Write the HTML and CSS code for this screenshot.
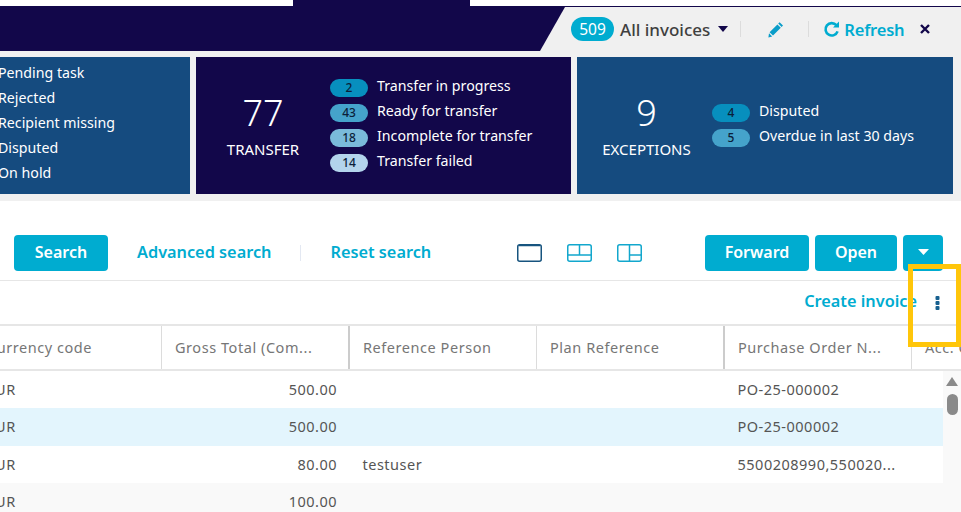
FILE: index.html
```html
<!DOCTYPE html>
<html lang="en">
  <head>
    <meta charset="UTF-8" />
    <meta name="viewport" content="width=device-width, initial-scale=1.0" />
    <title>Invoices</title>
    <link rel="stylesheet" href="styles.css">
  </head>
  <body>
    <div class="page">
      <!-- top strip -->
      <div class="top-strip"><div class="top-tab"></div></div>

      <!-- header -->
      <div class="header">
        <div class="header-brand"></div>
        <div class="header-tools">
          <span class="count-badge">509</span>
          <span class="view-name">All invoices</span>
          <svg class="caret-dark" width="10" height="6" viewBox="0 0 10 6"><path d="M0 0h10L5 6z" /></svg>
          <span class="tool-sep sep-first"></span>
          <svg class="pencil" width="16" height="17" viewBox="0 0 16 17">
            <path d="M11.6 1.2 15 4.4 13.6 5.9 10.2 2.6zM9.4 3.4 12.8 6.7 5 14.6 1.6 11.2zM1 12.2 4.2 15.4 0.4 16.4z" />
          </svg>
          <span class="tool-sep sep-second"></span>
          <svg class="refresh-icon" width="17" height="17" viewBox="0 0 17 17">
            <path d="M13.4 4.2A6.2 6.2 0 1 0 14.6 10.4" fill="none" stroke="#00acd0" stroke-width="2.6" />
            <path d="M10 6.6 16 6.6 16 .6z" />
          </svg>
          <span class="refresh-text">Refresh</span>
          <svg class="close-icon" width="10" height="10" viewBox="0 0 10 10"><path d="M1 1l8 8M9 1l-8 8" /></svg>
        </div>
      </div>

      <!-- stat cards -->
      <div class="stats">
        <div class="stat-card card-blue">
          <ul class="plain-list">
            <li>Pending task</li>
            <li>Rejected</li>
            <li>Recipient missing</li>
            <li>Disputed</li>
            <li>On hold</li>
          </ul>
        </div>
        <div class="stat-card card-navy">
          <div class="stat-total">
            <div class="stat-number">77</div>
            <div class="stat-label">TRANSFER</div>
          </div>
          <ul class="stat-list">
            <li><span class="pill pill-1">2</span><span class="stat-text">Transfer in progress</span></li>
            <li><span class="pill pill-2">43</span><span class="stat-text">Ready for transfer</span></li>
            <li><span class="pill pill-3">18</span><span class="stat-text">Incomplete for transfer</span></li>
            <li><span class="pill pill-4">14</span><span class="stat-text">Transfer failed</span></li>
          </ul>
        </div>
        <div class="stat-card card-blue">
          <div class="stat-total">
            <div class="stat-number">9</div>
            <div class="stat-label">EXCEPTIONS</div>
          </div>
          <ul class="stat-list">
            <li><span class="pill pill-1">4</span><span class="stat-text">Disputed</span></li>
            <li><span class="pill pill-2">5</span><span class="stat-text">Overdue in last 30 days</span></li>
          </ul>
        </div>
      </div>

      <!-- search toolbar -->
      <div class="toolbar">
        <button class="btn btn-search">Search</button>
        <a class="link link-advanced">Advanced search</a>
        <span class="link-sep"></span>
        <a class="link">Reset search</a>
        <div class="layout-icons">
          <svg class="layout-active" width="25" height="18" viewBox="0 0 25 18"><rect x=".75" y=".75" width="23.5" height="16.5" rx="2" /><path d="M2 1.5h21" /></svg>
          <svg width="25" height="18" viewBox="0 0 25 18"><rect x=".75" y=".75" width="23.5" height="16.5" rx="2" /><path d="M1 11h23M12.5 1v10" /></svg>
          <svg width="25" height="18" viewBox="0 0 25 18"><rect x=".75" y=".75" width="23.5" height="16.5" rx="2" /><path d="M12.5 1v16M12.5 11h12" /></svg>
        </div>
        <div class="toolbar-actions">
          <button class="btn btn-forward">Forward</button>
          <button class="btn btn-open">Open</button>
          <button class="btn btn-more"><svg width="11" height="6" viewBox="0 0 11 6"><path d="M0 0h11L5.5 6z" /></svg></button>
        </div>
      </div>

      <!-- actions -->
      <div class="actions-row">
        <a class="link link-create">Create invoice</a>
        <svg class="dots" width="5" height="14" viewBox="0 0 5 14"><rect x=".5" width="4" height="4" rx="1" /><rect x=".5" y="5" width="4" height="4" rx="1" /><rect x=".5" y="10" width="4" height="4" rx="1" /></svg>
      </div>

      <!-- table -->
      <div class="table-head">
        <div class="th">Currency code</div>
        <div class="th th-strong">Gross Total (Com...</div>
        <div class="th">Reference Person</div>
        <div class="th th-strong">Plan Reference</div>
        <div class="th">Purchase Order N...</div>
        <div class="th th-last">Acc. Code</div>
      </div>
      <div class="table-wrap">
        <div class="table-body">
          <div class="tr">
            <div class="td">EUR</div><div class="td td-num">500.00</div><div class="td"></div><div class="td"></div><div class="td">PO-25-000002</div>
          </div>
          <div class="tr tr-selected">
            <div class="td">EUR</div><div class="td td-num">500.00</div><div class="td"></div><div class="td"></div><div class="td">PO-25-000002</div>
          </div>
          <div class="tr">
            <div class="td">EUR</div><div class="td td-num">80.00</div><div class="td">testuser</div><div class="td"></div><div class="td">5500208990,550020...</div>
          </div>
          <div class="tr tr-alt">
            <div class="td">EUR</div><div class="td td-num">100.00</div><div class="td"></div><div class="td"></div><div class="td"></div>
          </div>
        </div>
        <div class="scroll-track">
          <div class="scroll-up"></div>
          <div class="scroll-thumb"></div>
        </div>
      </div>
    </div>

    <!-- highlight frame from the annotated screenshot -->
    <div class="highlight"></div>
  </body>
</html>
```

FILE: styles.css
```css
:root {
  --navy: #12074a;
  --blue: #154b7f;
  --accent: #00acd0;
  --panel: #f0f0f0;
  --line: #e6e6e6;
  --text: #555555;
  --head-text: #767676;
}

* {
  box-sizing: border-box;
  margin: 0;
  padding: 0;
}
html,
body {
  height: 100%;
  overflow: hidden;
}
body {
  font-family: "Noto Sans", "Open Sans", sans-serif;
  background-color: #ffffff;
  color: var(--text);
}
ul {
  list-style: none;
}
.page {
  width: 987px;
  margin-left: -26px;
}
.top-strip {
  height: 6px;
  padding-left: 319px;
}
.top-tab {
  width: 177px;
  height: 6px;
  background-color: var(--navy);
}
/* header */
.header {
  display: flex;
  height: 45px;
  background-color: var(--panel);
  border-top: 1px solid var(--navy);
}
.header-brand {
  width: 591px;
  background-color: var(--navy);
  clip-path: polygon(0 0, 100% 0, calc(100% - 25px) 100%, 0 100%);
}
.header-tools {
  display: flex;
  align-items: center;
  padding-left: 6px;
}
.count-badge {
  width: 43px;
  height: 24px;
  line-height: 24px;
  border-radius: 12px;
  background-color: var(--accent);
  color: #fff;
  font-size: 15.5px;
  text-align: center;
}
.view-name {
  margin-left: 6px;
  font-size: 17px;
  font-weight: 500;
  color: #3f3f3f;
}
.caret-dark {
  margin-left: 8px;
  fill: #12074a;
}
.tool-sep {
  width: 1px;
  height: 16px;
  background-color: #dcdcdc;
}
.sep-first {
  margin-left: 12px;
}
.pencil {
  margin-left: 27px;
  fill: #0a9dc9;
}
.sep-second {
  margin-left: 24px;
}
.refresh-icon {
  margin-left: 14px;
  fill: var(--accent);
}
.refresh-text {
  margin-left: 4px;
  font-size: 16.5px;
  font-weight: 600;
  letter-spacing: -0.2px;
  color: var(--accent);
}
.close-icon {
  margin-left: 16px;
  stroke: var(--navy);
  stroke-width: 2.4;
}
/* stat cards */
.stats {
  display: grid;
  grid-template-columns: 216px 375px 376px;
  gap: 6px;
  height: 150px;
  padding: 6px 0 7px;
  background-color: var(--panel);
}
.stat-card {
  display: flex;
  align-items: center;
  color: #fff;
  font-size: 14.2px;
}
.card-blue {
  background-color: var(--blue);
}
.card-navy {
  background-color: var(--navy);
}
.plain-list {
  padding-left: 24px;
  margin-top: -7px;
}
.plain-list li {
  height: 25px;
  line-height: 25px;
}
.stat-total {
  flex: 0 0 135px;
  padding-left: 4px;
  text-align: center;
}
.card-navy .stat-total {
  flex-basis: 134px;
  padding-left: 0;
}
.stat-number {
  font-size: 36px;
  font-weight: 300;
  line-height: 44px;
}
.stat-label {
  margin-top: 3px;
  font-size: 15px;
  line-height: 22px;
}
.stat-list li {
  display: flex;
  align-items: center;
  height: 25px;
}
.stat-text {
  margin-bottom: 5px;
}
.pill {
  flex: none;
  width: 38px;
  height: 18px;
  line-height: 18px;
  margin-right: 9px;
  border-radius: 9px;
  color: #0b1f3a;
  font-size: 12px;
  font-weight: 500;
  text-align: center;
}
.pill-1 {
  background-color: #078fbe;
}
.pill-2 {
  background-color: #45a3cb;
}
.pill-3 {
  background-color: #7abada;
}
.pill-4 {
  background-color: #b3d4ec;
}
/* toolbar */
.toolbar {
  display: flex;
  align-items: center;
  height: 80px;
  padding: 34px 18px 9px 40px;
  border-bottom: 1px solid var(--line);
}
.btn {
  height: 36px;
  padding-bottom: 2px;
  border: none;
  border-radius: 4px;
  background-color: var(--accent);
  color: #fff;
  font-family: inherit;
  font-size: 16px;
  font-weight: 600;
}
.btn-search {
  width: 94px;
}
.link {
  margin-bottom: 3px;
  color: var(--accent);
  font-size: 16.3px;
  font-weight: 600;
  white-space: nowrap;
}
.link-advanced {
  margin-left: 29px;
}
.link-sep {
  width: 1px;
  height: 16px;
  margin: 0 29px;
  background-color: #e3e8f2;
}
.layout-icons {
  display: flex;
  gap: 25px;
  margin-left: 86px;
}
.layout-icons svg {
  fill: none;
  stroke: #12a7cd;
  stroke-width: 1.5;
}
.layout-icons .layout-active {
  stroke: #17547f;
}
.toolbar-actions {
  display: flex;
  gap: 6px;
  margin-left: auto;
}
.btn-forward {
  width: 104px;
}
.btn-open {
  width: 82px;
}
.btn-more {
  display: flex;
  align-items: center;
  justify-content: center;
  width: 40px;
  padding-bottom: 2px;
}
.btn-more svg {
  fill: #fff;
}
/* actions row */
.actions-row {
  display: flex;
  align-items: center;
  justify-content: flex-end;
  height: 45px;
  padding-right: 21px;
  border-bottom: 2px solid var(--line);
}
.link-create {
  margin-right: 18px;
}
.dots {
  fill: #17608f;
}
/* table */
.table-head,
.tr {
  display: grid;
  grid-template-columns: 188px 188px 187px 188px 187px;
}
.table-head {
  grid-template-columns: 188px 188px 187px 188px 187px 49px;
  height: 45px;
  border-bottom: 2px solid var(--line);
}
.th {
  padding-left: 13px;
  border-right: 1px solid #dcdcdc;
  line-height: 43px;
  color: var(--head-text);
  font-size: 14.5px;
  letter-spacing: 0.55px;
  white-space: nowrap;
  overflow: hidden;
}
.th-strong {
  border-right: 2px solid #cccccc;
}
.th-last {
  border-right: none;
}
.table-wrap {
  display: flex;
}
.table-body {
  width: 969px;
}
.tr {
  height: 37px;
}
.tr-selected {
  height: 38px;
  background-color: #e3f5fd;
}
.tr-alt {
  background-color: #f9f9f9;
}
.td {
  padding: 0 13px 0 12.5px;
  line-height: 36px;
  font-size: 14.5px;
  letter-spacing: 0.5px;
  white-space: nowrap;
}
.td-num {
  text-align: right;
}
.scroll-track {
  flex: none;
  width: 18px;
  height: 141px;
  padding-top: 6px;
  background-color: #f9f9f9;
}
.scroll-up {
  width: 0;
  height: 0;
  margin-left: 3px;
  border-left: 6.5px solid transparent;
  border-right: 6.5px solid transparent;
  border-bottom: 9px solid #8a8a8a;
}
.scroll-thumb {
  width: 11px;
  height: 21px;
  margin: 8px 0 0 4px;
  border-radius: 5.5px;
  background-color: #8a8a8a;
}
/* yellow annotation */
.highlight {
  position: absolute;
  left: 908px;
  top: 264px;
  width: 53px;
  height: 83px;
  border: 5px solid #ffc60a;
}
```
